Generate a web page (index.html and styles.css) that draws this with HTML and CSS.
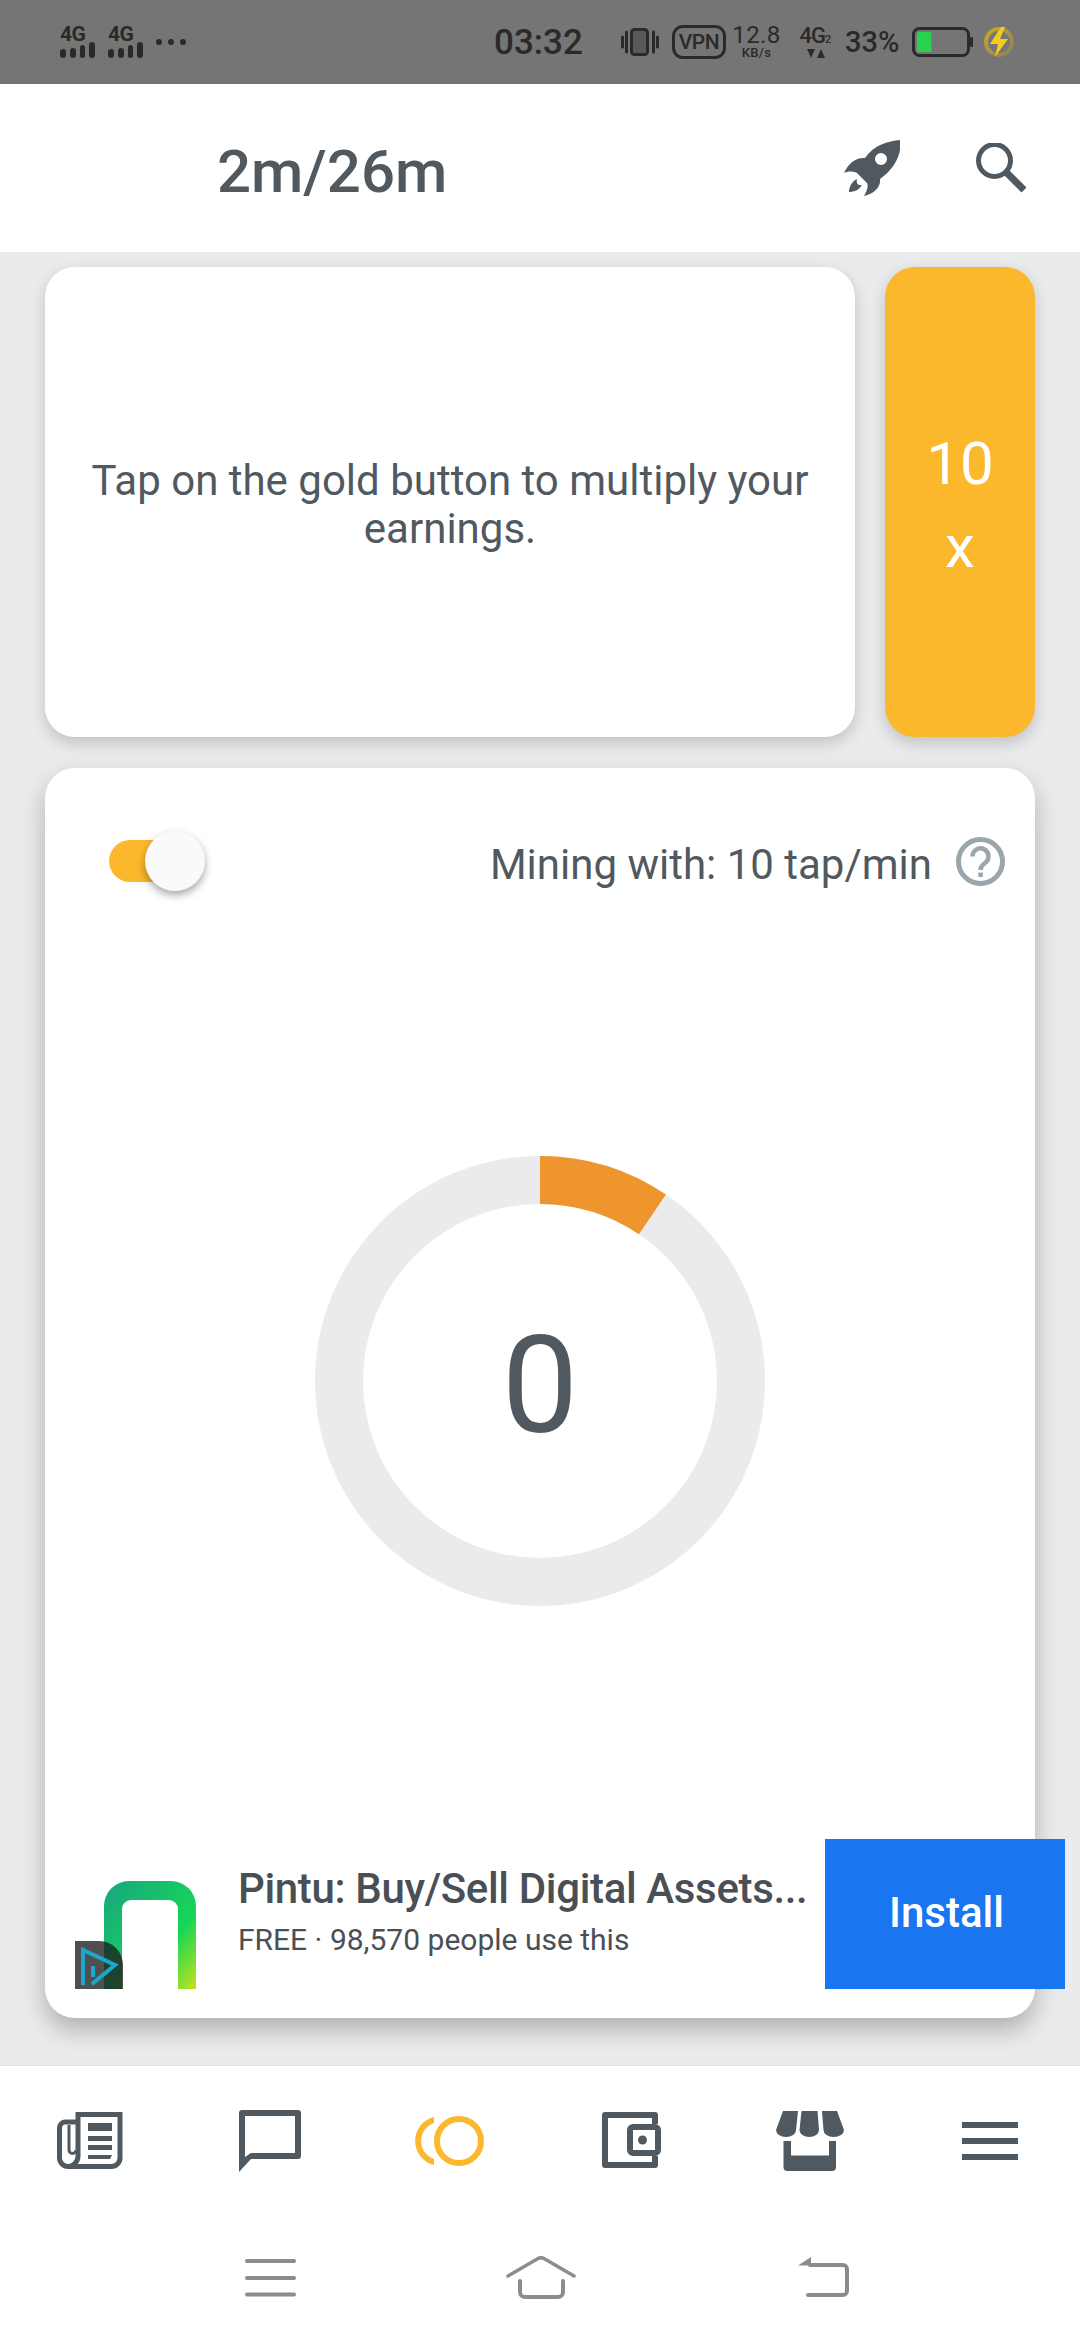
FILE: index.html
```html
<!DOCTYPE html>
<html lang="en">
<head>
<meta charset="utf-8">
<title>Mining</title>
<link rel="stylesheet" href="styles.css">
</head>
<body>
<div class="phone">
  <div class="status">
    <div class="status-left">
      <div class="sig"><span class="sig-t">4G</span><div class="bars"><i class="b1"></i><i class="b2"></i><i class="b3"></i><i class="b4"></i></div></div>
      <div class="sig"><span class="sig-t">4G</span><div class="bars"><i class="b1"></i><i class="b2"></i><i class="b3"></i><i class="b4"></i></div></div>
      <div class="dots"><i></i><i></i><i></i></div>
    </div>
    <div class="time">03:32</div>
    <div class="status-right">
      <svg class="vib" width="38" height="28" viewBox="0 0 38 28"><rect x="10.500" y="1.500" width="16" height="25" rx="3" fill="#5a5a5a" stroke="#2a2a2a" stroke-width="3"/><path d="M1.500 9v10M5.500 4v20M32.500 4v20M36.500 9v10" stroke="#2a2a2a" stroke-width="3" stroke-linecap="round" fill="none"/></svg>
      <div class="vpn">VPN</div>
      <div class="speed"><span class="speed-n">12.8</span><span class="speed-u">KB/s</span></div>
      <div class="net"><span class="net-t">4G<sub class="net-s">2</sub></span><svg width="18" height="9" viewBox="0 0 18 9"><path d="M0 0h8L4 9zM14 0l4 9h-8z" fill="#2a2a2a"/></svg></div>
      <div class="pct">33%</div>
      <svg class="batt" width="61" height="30" viewBox="0 0 61 30"><rect x="1.500" y="1.500" width="55" height="27" rx="6" fill="none" stroke="#2a2a2a" stroke-width="3"/><rect x="5" y="5" width="14.500" height="20" rx="1.500" fill="#28d24f"/><rect x="58" y="10" width="3" height="10" rx="1" fill="#2a2a2a"/></svg>
      <svg class="bolt" width="30" height="30" viewBox="0 0 30 30"><defs><linearGradient id="bg" x1="0" y1="0" x2="1" y2="1"><stop offset="0" stop-color="#c9a928"/><stop offset="1" stop-color="#8b8258"/></linearGradient></defs><circle cx="15" cy="15" r="13" fill="none" stroke="url(#bg)" stroke-width="4"/><path d="M17 0L6 17h8l-3 13 13-18h-8l5-12z" fill="#f4cb1e"/></svg>
    </div>
  </div>

  <header class="head">
    <div class="head-title">2m/26m</div>
    <svg class="rocket" width="56" height="56" viewBox="0 0 56 56"><path fill-rule="evenodd" d="M56 0C44 1 30 5 21 18C13 17 5 22 0 33C4 31 9 31 13 33L23 43C25 47 22 52 20 56C30 54 37 47 36 39C51 28 58 14 56 0ZM37 13A6 6 0 1 0 37 25A6 6 0 1 0 37 13Z" fill="#50595f"/><path d="M13 39C8 41 5 47 5 52C10 52 15 50 18 45C14 46 12 43 13 39Z" fill="#50595f"/></svg>
    <svg class="search" width="50" height="50" viewBox="0 0 50 50"><circle cx="18.500" cy="17.500" r="16" fill="none" stroke="#50595f" stroke-width="5"/><path d="M30 29L48 47" stroke="#50595f" stroke-width="7" fill="none"/></svg>
  </header>

  <main class="content">
    <section class="top-row">
      <div class="card hint"><p class="hint-text">Tap on the gold button to multiply your earnings.</p></div>
      <div class="gold"><span class="gold-n">10</span><span class="gold-x">x</span></div>
    </section>
    <section class="card miner">
      <div class="miner-head">
        <div class="toggle"><div class="toggle-track"></div><div class="toggle-knob"></div></div>
        <div class="mining-text">Mining with: 10 tap/min</div>
        <svg class="help" width="49" height="49" viewBox="0 0 49 49"><circle cx="24.500" cy="24.500" r="22" fill="none" stroke="#9aa5ac" stroke-width="5"/><path d="M16.500 19.500a8 8 0 1 1 12.500 6.500c-3 2-4.500 3.500-4.500 7" fill="none" stroke="#9aa5ac" stroke-width="4.500"/><rect x="22.300" y="35.500" width="4.500" height="4.500" fill="#9aa5ac"/></svg>
      </div>
      <div class="ring">
        <svg class="ring-svg" width="450" height="450" viewBox="0 0 450 450"><circle cx="225" cy="225" r="201" fill="none" stroke="#e9ebed" stroke-width="48"/><path d="M225 24A201 201 0 0 1 337.400 58.400" fill="none" stroke="#ee952e" stroke-width="48"/></svg>
        <div class="ring-count">0</div>
      </div>
      <div class="ad">
        <div class="ad-icon">
          <svg width="92" height="108" viewBox="0 0 92 108"><defs><linearGradient id="ng" x1="0" y1="0" x2="1" y2="1"><stop offset="0" stop-color="#18a583"/><stop offset=".65" stop-color="#17d656"/><stop offset="1" stop-color="#c4e21c"/></linearGradient></defs><path d="M0 108V25A25 25 0 0 1 25 0H67A25 25 0 0 1 92 25V108H74V28a9 9 0 0 0-9-9H27a9 9 0 0 0-9 9V108Z" fill="url(#ng)"/></svg>
          <svg class="ad-badge" width="48" height="48" viewBox="0 0 48 48"><path d="M0 0H24A24 24 0 0 1 48 24V48H0Z" fill="#1e1e1e" fill-opacity=".78"/><path d="M8 44V9L40 24L17 43" fill="none" stroke="#1aa8d0" stroke-width="4"/><path d="M18 25V36" stroke="#1aa8d0" stroke-width="4"/></svg>
        </div>
        <div class="ad-text">
          <div class="ad-title">Pintu: Buy/Sell Digital Assets...</div>
          <div class="ad-sub">FREE · 98,570 people use this</div>
        </div>
        <div class="ad-btn">Install</div>
      </div>
    </section>
  </main>

  <nav class="tabs">
    <div class="tab"><svg width="66" height="57" viewBox="0 0 66 57"><path d="M21 9V2.500H63V46a8.500 8.500 0 0 1-8.500 8.500H11A8.500 8.500 0 0 1 2.500 46V16A6 6 0 0 1 8.500 10H21V44C21 50 16 54.500 11 54.500" fill="none" stroke="#50595f" stroke-width="5"/><path d="M12 13V38a3.500 3.500 0 0 0 7 0" fill="none" stroke="#50595f" stroke-width="3"/><path d="M31 11h24v8H31zM31 24h24v5H31zM31 33h24v5H31zM31 43h24l-2 4H31z" fill="#50595f"/></svg></div>
    <div class="tab"><svg width="62" height="62" viewBox="0 0 62 62"><path fill-rule="evenodd" d="M3 0H59a3 3 0 0 1 3 3V46a3 3 0 0 1-3 3H12L0 62V3A3 3 0 0 1 3 0ZM6 6V47L12 43H56V6Z" fill="#50595f"/></svg></div>
    <div class="tab"><svg width="70" height="50" viewBox="0 0 70 50"><circle cx="44" cy="25" r="22" fill="none" stroke="#fbb82d" stroke-width="6"/><path d="M19 1A24.700 24.700 0 0 0 19 49V43A19 19 0 0 1 19 7Z" fill="#fbb82d"/></svg></div>
    <div class="tab tab-wallet"><svg width="60" height="57" viewBox="0 0 60 57"><path d="M53 12V3H3V53H53V44" fill="none" stroke="#50595f" stroke-width="6" stroke-linejoin="round"/><rect x="28" y="15" width="28" height="26" rx="3" fill="none" stroke="#50595f" stroke-width="6"/><circle cx="40.500" cy="28" r="4.500" fill="#50595f"/></svg></div>
    <div class="tab"><svg width="68" height="60" viewBox="0 0 68 60"><path d="M7 0H22L20 19A10 7 0 0 1 0 19ZM25.500 0H41.500L43 19A9.700 7 0 0 1 23.500 19ZM46 0H61L68 19A10.200 7 0 0 1 47.500 19ZM7.500 30H15V44.500H53V30H60V56a4 4 0 0 1-4 4H11.500a4 4 0 0 1-4-4Z" fill="#50595f"/></svg></div>
    <div class="tab"><div class="burger"><i></i><i></i><i></i></div></div>
  </nav>

  <div class="sysnav">
    <svg class="sys-menu" width="51" height="40" viewBox="0 0 51 40"><path d="M2 3H49M2 20H49M2 36.500H49" stroke="#8c8c8c" stroke-width="4" stroke-linecap="round" fill="none"/></svg>
    <svg class="sys-home" width="70" height="44" viewBox="0 0 70 44"><path d="M2 20L32 2.500Q35 1 38 2.500L68 20" stroke="#8c8c8c" stroke-width="3.500" stroke-linecap="round" fill="none"/><path d="M14 25V36a5 5 0 0 0 5 5H52a5 5 0 0 0 5-5V25" stroke="#8c8c8c" stroke-width="4" stroke-linecap="round" fill="none"/></svg>
    <svg class="sys-back" width="52" height="42" viewBox="0 0 52 42"><path d="M0 8.500L13 0V8.500Z" fill="#8c8c8c"/><path d="M12 8H45a4 4 0 0 1 4 4V34a4 4 0 0 1-4 4H10" stroke="#8c8c8c" stroke-width="4" stroke-linecap="round" fill="none"/></svg>
  </div>
</div>
</body>
</html>
```
FILE: styles.css
```css
* { box-sizing: border-box; }
html, body { margin: 0; padding: 0; }
body { font-family: Roboto, "Noto Sans", sans-serif; color: #50595f; background: #e9ebed; }
i { display: block; }
.phone { width: 1080px; height: 2340px; display: flex; flex-direction: column; overflow: hidden; }

.status { height: 84px; flex: none; background: #757575; color: #2a2a2a; display: flex; align-items: center; }
.status-left { flex: 1; display: flex; align-items: center; padding-left: 60px; gap: 13px; }
.sig { width: 35px; display: flex; flex-direction: column; }
.sig-t { font-size: 21px; line-height: 15px; font-weight: 700; letter-spacing: -0.5px; }
.bars { display: flex; align-items: flex-end; gap: 4px; height: 16px; }
.bars i { width: 6px; background: #2a2a2a; border-radius: 3px; }
.b1 { height: 9px; }
.b2 { height: 10px; }
.b3 { height: 13px; }
.b4 { height: 16px; }
.dots { display: flex; gap: 6px; }
.dots i { width: 6px; height: 6px; border-radius: 50%; background: #2a2a2a; }
.time { font-size: 35px; font-weight: 500; width: 91px; white-space: nowrap; }
.status-right { flex: 0 0 495px; padding-left: 36px; display: flex; align-items: center; }
.vpn { margin-left: 13px; width: 54px; height: 34px; border: 3px solid #2a2a2a; border-radius: 11px; font-size: 21px; font-weight: 500; line-height: 28px; text-align: center; letter-spacing: -0.5px; }
.speed { margin-left: 7px; width: 47px; display: flex; flex-direction: column; align-items: center; }
.speed-n { font-size: 24px; line-height: 21px; letter-spacing: 0.4px; white-space: nowrap; }
.speed-u { font-size: 13px; line-height: 14px; font-weight: 500; letter-spacing: 0.3px; }
.net { margin-left: 19px; width: 33px; display: flex; flex-direction: column; align-items: center; gap: 4px; }
.net-t { font-size: 22px; line-height: 19px; font-weight: 500; letter-spacing: -1px; white-space: nowrap; }
.net-s { font-size: 11px; line-height: 0; vertical-align: baseline; letter-spacing: 0; }
.pct { margin-left: 13px; width: 54px; font-size: 29px; font-weight: 500; white-space: nowrap; }
.batt { margin-left: 13px; }
.bolt { margin-left: 11px; }

.head { height: 168px; flex: none; background: #fff; display: flex; align-items: center; padding-left: 217px; }
.head-title { font-size: 60px; font-weight: 500; flex: 1; padding-top: 6px; }
.rocket { margin-right: 76px; }
.search { margin-right: 54px; }

.content { flex: 1; padding: 15px 45px 0; min-height: 0; }
.card { background: #fff; border-radius: 30px; box-shadow: 0 6px 16px rgba(0,0,0,.18); }
.top-row { display: flex; gap: 30px; height: 470px; }
.hint { flex: 1; display: flex; align-items: center; justify-content: center; padding: 5px 45px 0; }
.hint-text { margin: 0; font-size: 42px; line-height: 48px; text-align: center; }
.gold { width: 150px; background: #fbb82d; border-radius: 30px; box-shadow: 0 6px 16px rgba(0,0,0,.18); display: flex; flex-direction: column; align-items: center; color: #fff; padding-top: 155px; }
.gold-n { font-size: 60px; line-height: 84px; }
.gold-x { font-size: 60px; line-height: 82px; }

.miner { margin-top: 31px; height: 1250px; display: flex; flex-direction: column; padding-top: 62px; box-shadow: 0 12px 24px rgba(0,0,0,.25); }
.miner-head { display: flex; align-items: center; padding: 0 30px 0 64px; }
.toggle { width: 96px; height: 62px; position: relative; margin-right: auto; }
.toggle-track { position: absolute; left: 0; top: 10px; width: 80px; height: 42px; background: #fbb82d; border-radius: 21px; }
.toggle-knob { position: absolute; left: 36px; top: 1px; width: 60px; height: 60px; border-radius: 50%; background: #fafafa; box-shadow: 0 4px 8px rgba(0,0,0,.35); }
.mining-text { font-size: 42px; margin-right: 24px; padding-top: 6px; white-space: nowrap; }
.ring { width: 450px; height: 450px; margin: 264px auto 0; position: relative; display: flex; align-items: center; justify-content: center; padding-top: 9px; }
.ring-svg { position: absolute; left: 0; top: 0; }
.ring-count { font-size: 136px; position: relative; line-height: 1; }

.ad { margin-top: auto; margin-bottom: 29px; margin-right: -30px; height: 150px; display: flex; align-items: flex-end; padding-left: 30px; }
.ad-icon { position: relative; width: 121px; height: 108px; display: flex; justify-content: flex-end; }
.ad-badge { position: absolute; left: 0; bottom: 0; }
.ad-text { flex: 1; align-self: center; padding: 0 0 6px 42px; min-width: 0; }
.ad-title { font-size: 42px; font-weight: 500; line-height: 50px; color: #4a4f55; white-space: nowrap; letter-spacing: -0.35px; }
.ad-sub { font-size: 30px; line-height: 38px; margin-top: 7px; color: #4a4f55; white-space: nowrap; }
.ad-btn { flex: none; width: 240px; height: 150px; background: #1a76f0; color: #fff; font-size: 42px; font-weight: 500; display: flex; align-items: center; justify-content: center; padding: 0 0 3px 3px; }

.tabs { height: 150px; flex: none; background: #fff; display: grid; grid-template-columns: repeat(6, 180px); border-top: 1px solid #e0e2e4; }
.tab { display: flex; align-items: center; justify-content: center; }
.tab-wallet { padding-left: 3px; }
.burger { width: 56px; display: flex; flex-direction: column; gap: 10px; }
.burger i { height: 6px; background: #50595f; }

.sysnav { height: 125px; flex: none; background: #fff; display: flex; align-items: center; padding-left: 245px; }
.sys-home { margin-left: 210px; }
.sys-back { margin-left: 222px; }
```
